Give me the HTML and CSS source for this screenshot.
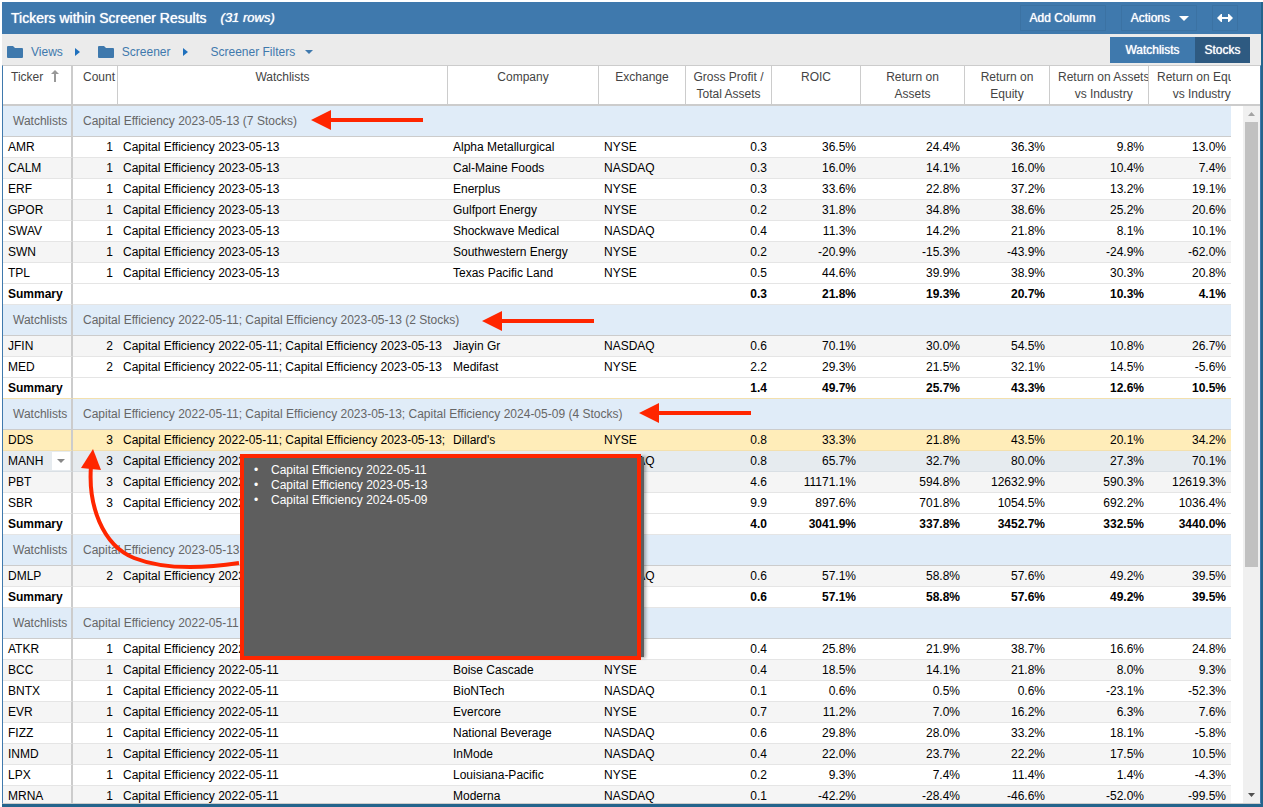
FILE: index.html
```
<!DOCTYPE html>
<html lang="en">
<head>
    <meta charset="utf-8">
    <title>Tickers within Screener Results</title>
    <link rel="stylesheet" href="styles.css">
</head>
<body>
    <div class="panel">
        <div class="title-bar">
            <h1>Tickers within Screener Results</h1>
            <span class="row-count">(31 rows)</span>
            <div class="actions">
                <button class="bar-button" type="button">Add Column</button>
                <button class="bar-button menu" type="button">Actions
                    <svg width="10" height="5" viewBox="0 0 10 5"><path d="M0 0h10L5 5z" fill="#fff"/></svg>
                </button>
                <button class="bar-button wide" type="button" aria-label="Resize">
                    <svg width="16" height="8" viewBox="0 0 16 8"><path d="M0 4L4 0h1v3h6V0h1l4 4-4 4h-1V5H5v3H4z" fill="#fff"/></svg>
                </button>
            </div>
        </div>
        <div class="toolbar">
            <nav class="crumbs">
                <a href="#">
                    <svg class="folder" width="16" height="12" viewBox="0 0 16 12"><path d="M1 0h5l2 2h7q1 0 1 1v8q0 1-1 1H1q-1 0-1-1V1q0-1 1-1z" fill="#3f79ad"/></svg>
                    Views
                </a>
                <svg class="arrow" width="5" height="8" viewBox="0 0 5 8"><path d="M0 0l5 4-5 4z" fill="#1f70bd"/></svg>
                <a href="#">
                    <svg class="folder" width="16" height="12" viewBox="0 0 16 12"><path d="M1 0h5l2 2h7q1 0 1 1v8q0 1-1 1H1q-1 0-1-1V1q0-1 1-1z" fill="#3f79ad"/></svg>
                    Screener
                </a>
                <svg class="arrow" width="5" height="8" viewBox="0 0 5 8"><path d="M0 0l5 4-5 4z" fill="#1f70bd"/></svg>
                <a href="#">
                    Screener Filters
                    <svg class="caret" width="8" height="4" viewBox="0 0 8 4"><path d="M0 0h8L4 4z" fill="#3f79ad"/></svg>
                </a>
            </nav>
            <div class="tabs">
                <button class="tab" type="button">Watchlists</button>
                <button class="tab active" type="button">Stocks</button>
            </div>
        </div>
        <div class="grid">
            <table class="results">
                <colgroup>
                    <col class="c-ticker"><col class="c-count"><col><col class="c-company"><col class="c-exchange">
                    <col class="c-gp"><col class="c-roic"><col class="c-roa"><col class="c-roe"><col class="c-roai"><col class="c-roei">
                </colgroup>
                <thead>
                    <tr>
                        <th>Ticker <svg class="sort" width="8" height="12" viewBox="0 0 8 12"><path d="M4 0l4 4H5v8H3V4H0z" fill="#999"/></svg></th>
                        <th><span>Count</span></th>
                        <th>Watchlists</th>
                        <th>Company</th>
                        <th>Exchange</th>
                        <th>Gross Profit /<br>Total Assets</th>
                        <th>ROIC</th>
                        <th>Return on<br>Assets</th>
                        <th>Return on<br>Equity</th>
                        <th><span>Return on Assets<br>vs Industry</span></th>
                        <th><span>Return on Equity<br>vs Industry</span></th>
                    </tr>
                </thead>
                <tbody>
                    <tr class="group"><td>Watchlists</td><td colspan="10">Capital Efficiency 2023-05-13 (7 Stocks)</td></tr>
                    <tr><td>AMR</td><td>1</td><td>Capital Efficiency 2023-05-13</td><td>Alpha Metallurgical</td><td>NYSE</td><td>0.3</td><td>36.5%</td><td>24.4%</td><td>36.3%</td><td>9.8%</td><td>13.0%</td></tr>
                    <tr class="alt"><td>CALM</td><td>1</td><td>Capital Efficiency 2023-05-13</td><td>Cal-Maine Foods</td><td>NASDAQ</td><td>0.3</td><td>16.0%</td><td>14.1%</td><td>16.0%</td><td>10.4%</td><td>7.4%</td></tr>
                    <tr><td>ERF</td><td>1</td><td>Capital Efficiency 2023-05-13</td><td>Enerplus</td><td>NYSE</td><td>0.3</td><td>33.6%</td><td>22.8%</td><td>37.2%</td><td>13.2%</td><td>19.1%</td></tr>
                    <tr class="alt"><td>GPOR</td><td>1</td><td>Capital Efficiency 2023-05-13</td><td>Gulfport Energy</td><td>NYSE</td><td>0.2</td><td>31.8%</td><td>34.8%</td><td>38.6%</td><td>25.2%</td><td>20.6%</td></tr>
                    <tr><td>SWAV</td><td>1</td><td>Capital Efficiency 2023-05-13</td><td>Shockwave Medical</td><td>NASDAQ</td><td>0.4</td><td>11.3%</td><td>14.2%</td><td>21.8%</td><td>8.1%</td><td>10.1%</td></tr>
                    <tr class="alt"><td>SWN</td><td>1</td><td>Capital Efficiency 2023-05-13</td><td>Southwestern Energy</td><td>NYSE</td><td>0.2</td><td>-20.9%</td><td>-15.3%</td><td>-43.9%</td><td>-24.9%</td><td>-62.0%</td></tr>
                    <tr><td>TPL</td><td>1</td><td>Capital Efficiency 2023-05-13</td><td>Texas Pacific Land</td><td>NYSE</td><td>0.5</td><td>44.6%</td><td>39.9%</td><td>38.9%</td><td>30.3%</td><td>20.8%</td></tr>
                    <tr class="summary"><td>Summary</td><td></td><td></td><td></td><td></td><td>0.3</td><td>21.8%</td><td>19.3%</td><td>20.7%</td><td>10.3%</td><td>4.1%</td></tr>

                    <tr class="group"><td>Watchlists</td><td colspan="10">Capital Efficiency 2022-05-11; Capital Efficiency 2023-05-13 (2 Stocks)</td></tr>
                    <tr class="alt"><td>JFIN</td><td>2</td><td>Capital Efficiency 2022-05-11; Capital Efficiency 2023-05-13</td><td>Jiayin Gr</td><td>NASDAQ</td><td>0.6</td><td>70.1%</td><td>30.0%</td><td>54.5%</td><td>10.8%</td><td>26.7%</td></tr>
                    <tr><td>MED</td><td>2</td><td>Capital Efficiency 2022-05-11; Capital Efficiency 2023-05-13</td><td>Medifast</td><td>NYSE</td><td>2.2</td><td>29.3%</td><td>21.5%</td><td>32.1%</td><td>14.5%</td><td>-5.6%</td></tr>
                    <tr class="summary before-selected"><td>Summary</td><td></td><td></td><td></td><td></td><td>1.4</td><td>49.7%</td><td>25.7%</td><td>43.3%</td><td>12.6%</td><td>10.5%</td></tr>

                    <tr class="group"><td>Watchlists</td><td colspan="10">Capital Efficiency 2022-05-11; Capital Efficiency 2023-05-13; Capital Efficiency 2024-05-09 (4 Stocks)</td></tr>
                    <tr class="selected"><td>DDS</td><td>3</td><td>Capital Efficiency 2022-05-11; Capital Efficiency 2023-05-13;</td><td>Dillard's</td><td>NYSE</td><td>0.8</td><td>33.3%</td><td>21.8%</td><td>43.5%</td><td>20.1%</td><td>34.2%</td></tr>
                    <tr class="hovered"><td><div class="ticker-cell">MANH<button class="row-menu" type="button" aria-label="Row menu"><svg width="8" height="4" viewBox="0 0 8 4"><path d="M0 0h8L4 4z" fill="#888"/></svg></button></div></td><td>3</td><td>Capital Efficiency 2022-05-11</td><td></td><td>NASDAQ</td><td>0.8</td><td>65.7%</td><td>32.7%</td><td>80.0%</td><td>27.3%</td><td>70.1%</td></tr>
                    <tr class="alt"><td>PBT</td><td>3</td><td>Capital Efficiency 2022-05-11</td><td></td><td></td><td>4.6</td><td>11171.1%</td><td>594.8%</td><td>12632.9%</td><td>590.3%</td><td>12619.3%</td></tr>
                    <tr><td>SBR</td><td>3</td><td>Capital Efficiency 2022-05-11</td><td></td><td></td><td>9.9</td><td>897.6%</td><td>701.8%</td><td>1054.5%</td><td>692.2%</td><td>1036.4%</td></tr>
                    <tr class="summary"><td>Summary</td><td></td><td></td><td></td><td></td><td>4.0</td><td>3041.9%</td><td>337.8%</td><td>3452.7%</td><td>332.5%</td><td>3440.0%</td></tr>

                    <tr class="group"><td>Watchlists</td><td colspan="10">Capital Efficiency 2023-05-13</td></tr>
                    <tr class="alt"><td>DMLP</td><td>2</td><td>Capital Efficiency 2023-05-13</td><td></td><td>NASDAQ</td><td>0.6</td><td>57.1%</td><td>58.8%</td><td>57.6%</td><td>49.2%</td><td>39.5%</td></tr>
                    <tr class="summary"><td>Summary</td><td></td><td></td><td></td><td></td><td>0.6</td><td>57.1%</td><td>58.8%</td><td>57.6%</td><td>49.2%</td><td>39.5%</td></tr>

                    <tr class="group"><td>Watchlists</td><td colspan="10">Capital Efficiency 2022-05-11</td></tr>
                    <tr><td>ATKR</td><td>1</td><td>Capital Efficiency 2022-05-11</td><td></td><td></td><td>0.4</td><td>25.8%</td><td>21.9%</td><td>38.7%</td><td>16.6%</td><td>24.8%</td></tr>
                    <tr class="alt"><td>BCC</td><td>1</td><td>Capital Efficiency 2022-05-11</td><td>Boise Cascade</td><td>NYSE</td><td>0.4</td><td>18.5%</td><td>14.1%</td><td>21.8%</td><td>8.0%</td><td>9.3%</td></tr>
                    <tr><td>BNTX</td><td>1</td><td>Capital Efficiency 2022-05-11</td><td>BioNTech</td><td>NASDAQ</td><td>0.1</td><td>0.6%</td><td>0.5%</td><td>0.6%</td><td>-23.1%</td><td>-52.3%</td></tr>
                    <tr class="alt"><td>EVR</td><td>1</td><td>Capital Efficiency 2022-05-11</td><td>Evercore</td><td>NYSE</td><td>0.7</td><td>11.2%</td><td>7.0%</td><td>16.2%</td><td>6.3%</td><td>7.6%</td></tr>
                    <tr><td>FIZZ</td><td>1</td><td>Capital Efficiency 2022-05-11</td><td>National Beverage</td><td>NASDAQ</td><td>0.6</td><td>29.8%</td><td>28.0%</td><td>33.2%</td><td>18.1%</td><td>-5.8%</td></tr>
                    <tr class="alt"><td>INMD</td><td>1</td><td>Capital Efficiency 2022-05-11</td><td>InMode</td><td>NASDAQ</td><td>0.4</td><td>22.0%</td><td>23.7%</td><td>22.2%</td><td>17.5%</td><td>10.5%</td></tr>
                    <tr><td>LPX</td><td>1</td><td>Capital Efficiency 2022-05-11</td><td>Louisiana-Pacific</td><td>NYSE</td><td>0.2</td><td>9.3%</td><td>7.4%</td><td>11.4%</td><td>1.4%</td><td>-4.3%</td></tr>
                    <tr class="alt"><td>MRNA</td><td>1</td><td>Capital Efficiency 2022-05-11</td><td>Moderna</td><td>NASDAQ</td><td>0.1</td><td>-42.2%</td><td>-28.4%</td><td>-46.6%</td><td>-52.0%</td><td>-99.5%</td></tr>
                </tbody>
            </table>
            <div class="side">
                <div class="side-head"></div>
                <div class="scrollbar">
                    <svg width="7" height="4" viewBox="0 0 7 4"><path d="M3.500 0L7 4H0z" fill="#a3a3a3"/></svg>
                    <div class="thumb"></div>
                    <svg class="down" width="7" height="4" viewBox="0 0 7 4"><path d="M0 0h7L3.500 4z" fill="#505050"/></svg>
                </div>
            </div>
        </div>
    </div>

    <ul class="tooltip">
        <li>Capital Efficiency 2022-05-11</li>
        <li>Capital Efficiency 2023-05-13</li>
        <li>Capital Efficiency 2024-05-09</li>
    </ul>
    <svg class="arrows" width="800" height="600" viewBox="0 0 800 600">
        <g fill="#ff2600">
            <path d="M311 120l20-10v8h92v4h-92v8z"/>
            <path d="M482 321l20-10v8h92v4h-92v8z"/>
            <path d="M639 413l20-10v8h92v4h-92v8z"/>
            <path d="M93 449l8 21-20-2z"/>
        </g>
        <path d="M91 466C88 505 102 545 134 558C162 569 200 569 239 563" fill="none" stroke="#ff2600" stroke-width="4"/>
    </svg>
</body>
</html>
```

FILE: styles.css
```
* {
    box-sizing: border-box;
}
body {
    margin: 0;
    height: 100vh;
    padding: 2px 0 0 2px;
    overflow: hidden;
    background-color: #fff;
    color: #000;
    font: 12px/18px Arial, "Liberation Sans", sans-serif;
}
button {
    font: inherit;
    color: #fff;
    padding: 0;
    cursor: pointer;
}
.panel {
    height: 100%;
    display: flex;
    flex-direction: column;
    border-right: 2px solid #24648c;
    border-bottom: 3px solid #24648c;
}

/* Title bar */
.title-bar {
    display: flex;
    align-items: center;
    height: 32px;
    flex: none;
    padding-left: 9px;
    background-color: #3f79ad;
    color: #fff;
    text-shadow: 0 0 1px #fff;
}
.title-bar h1 {
    margin: 0 14px 0 0;
    font-size: 14px;
    font-weight: normal;
}
.row-count {
    font-size: 13px;
    font-style: italic;
}
.actions {
    display: flex;
    gap: 15px;
    margin-left: auto;
    margin-right: 23px;
}
.bar-button {
    display: flex;
    align-items: center;
    justify-content: center;
    gap: 9px;
    height: 26px;
    padding: 0 9px;
    border: 1px solid #3b72a3;
    background: none;
    text-shadow: 0 0 1px #fff;
}
.bar-button.menu {
    padding-right: 7px;
}
.bar-button.wide {
    padding: 0 4px;
}

/* Breadcrumbs and tabs */
.toolbar {
    display: flex;
    justify-content: space-between;
    height: 31px;
    flex: none;
    padding: 3px 11px 2px 5px;
    background-color: #ebebeb;
}
.crumbs {
    display: flex;
    align-items: center;
    padding-top: 3px;
}
.crumbs a {
    display: flex;
    align-items: center;
    color: #3f79ad;
    text-decoration: none;
}
.folder {
    margin-right: 8px;
}
.arrow {
    margin: 0 18px 0 12px;
}
.arrow + a:last-child {
    margin-left: 5px;
}
.caret {
    margin-left: 10px;
}
.tabs {
    display: flex;
}
.tab {
    width: 85px;
    border: none;
    background-color: #3f79ad;
    text-shadow: 0 0 1px #fff;
}
.tab.active {
    width: 55px;
    background-color: #2e5a81;
}

/* Results grid */
.grid {
    display: flex;
    flex: 1;
    min-height: 0;
    overflow: hidden;
    border: 1px solid #3f79ad;
    border-top-color: #ccc;
    border-bottom-color: #ccc;
}
.results {
    flex: 1;
    width: 0;
    align-self: flex-start;
    table-layout: fixed;
    border-collapse: separate;
    border-spacing: 0;
}
.c-ticker { width: 70px; }
.c-count { width: 45px; }
.c-company { width: 151px; }
.c-exchange { width: 87px; }
.c-gp { width: 86px; }
.c-roic { width: 89px; }
.c-roa { width: 104px; }
.c-roe { width: 85px; }
.c-roai { width: 99px; }
.c-roei { width: 82px; }

th {
    height: 40px;
    padding: 3px 0 0;
    border-right: 1px solid #ccc;
    border-bottom: 2px solid #ccc;
    color: #444;
    font-weight: normal;
    line-height: 17px;
    text-align: center;
    vertical-align: top;
    white-space: nowrap;
    overflow: hidden;
}
th:first-child {
    padding-left: 8px;
    text-align: left;
}
/* Labels wider than their column start at the left padding and get cut */
th span {
    display: inline-block;
    margin-left: 8px;
}
th:last-child {
    border-right: none;
    text-align: left;
}
th span {
    text-align: center;
}
.sort {
    margin-left: 4px;
    vertical-align: -1px;
}
td {
    height: 21px;
    padding: 0 5px;
    border-bottom: 1px solid #e5e5e5;
    text-align: right;
    white-space: nowrap;
    overflow: hidden;
}
td:first-child {
    text-align: left;
}
th:first-child,
td:first-child {
    border-right: 2px solid #ccc;
}
td:nth-child(3),
td:nth-child(4),
td:nth-child(5) {
    text-align: left;
}
.alt td {
    background-color: #f5f5f5;
}
.summary td {
    font-weight: bold;
}
.before-selected td {
    border-bottom-color: #f3e0ae;
}
.selected td {
    padding-right: 0;
    background-color: #ffedb9;
    border-bottom-color: #f3e0ae;
}
.selected td,
.hovered td {
    padding-right: 5px;
}
.selected td:nth-child(3) {
    padding-right: 0;
}
.hovered td {
    background-color: #e6ebef;
    border-bottom-color: #d9dfe4;
}
.group td {
    height: 31px;
    padding-left: 10px;
    border-bottom-color: #ccc;
    background-color: #e0ecf8;
    color: #666;
    text-align: left;
}
.group td:first-child {
    padding-right: 0;
}
.ticker-cell {
    display: flex;
    justify-content: space-between;
    margin-right: -4px;
}
.row-menu {
    display: flex;
    align-items: center;
    justify-content: center;
    width: 18px;
    height: 18px;
    border: none;
    background-color: #fff;
}

/* Scrollbar */
.side {
    display: flex;
    flex-direction: column;
    width: 29px;
}
.side-head {
    height: 40px;
    border-bottom: 2px solid #ccc;
}
.scrollbar {
    display: flex;
    flex: 1;
    flex-direction: column;
    align-items: center;
    width: 17px;
    margin-left: auto;
    padding: 6px 0;
    background-color: #f0f0f0;
}
.thumb {
    width: 13px;
    height: 65%;
    margin-top: 6px;
    background-color: #c1c1c1;
}
.down {
    margin-top: auto;
}

/* Tooltip and callout arrows lie over the grid */
.tooltip {
    position: absolute;
    left: 240px;
    top: 454px;
    width: 401px;
    height: 206px;
    margin: 0;
    padding: 5px 0 0 10px;
    border: 4px solid #ff2600;
    background-color: #5e5e5e;
    box-shadow: 6px 0 0 -3px #5e5e5e, 7px 0 3px -2px rgba(0, 0, 0, 0.3);
    color: #fff;
    line-height: 15px;
    list-style: none;
}
.tooltip li::before {
    content: "•";
    display: inline-block;
    width: 17px;
}
.arrows {
    position: absolute;
    left: 0;
    top: 0;
    pointer-events: none;
}
```
